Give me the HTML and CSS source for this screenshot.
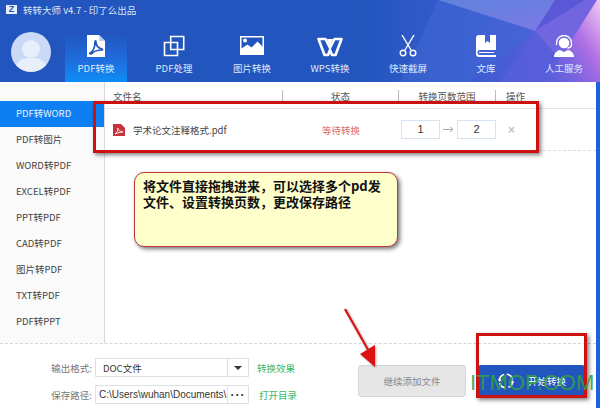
FILE: index.html
```html
<!DOCTYPE html>
<html lang="zh-CN">
<head>
<meta charset="utf-8">
<title>转转大师</title>
<link rel="stylesheet" href="styles.css">
</head>
<body>
<div class="app">
  <header class="header">
    <svg class="deco" viewBox="0 0 600 82" preserveAspectRatio="none" aria-hidden="true">
      <defs>
        <linearGradient id="sweep" x1="0" y1="0" x2="1" y2="0">
          <stop offset="0" stop-color="#2255bd"/>
          <stop offset="0.45" stop-color="#3a5cd0"/>
          <stop offset="1" stop-color="#6a5fe0"/>
        </linearGradient>
        <linearGradient id="pink" x1="0" y1="1" x2="1" y2="0">
          <stop offset="0" stop-color="#7a62e0" stop-opacity="0"/>
          <stop offset="0.6" stop-color="#b070e4"/>
          <stop offset="1" stop-color="#f2c8f4"/>
        </linearGradient>
        <linearGradient id="glow" x1="0" y1="0" x2="1" y2="1">
          <stop offset="0" stop-color="#5f82dc"/>
          <stop offset="1" stop-color="#7f78e6"/>
        </linearGradient>
      </defs>
      <rect x="360" y="0" width="240" height="82" fill="url(#sweep)"/>
      <polygon points="438,0 535,31 580,0" fill="url(#glow)"/>
      <polygon points="535,31 555,0 585,0" fill="#5a58d6"/>
      <polygon points="535,31 560,60 597,0 585,0" fill="#7265e0"/>
      <polygon points="438,0 535,31 470,82 400,82" fill="#3f68d4" opacity=".55"/>
      <polygon points="535,31 560,60 545,82 500,82" fill="#5a5fdc" opacity=".7"/>
      <polygon points="597,0 600,0 600,82 545,82" fill="url(#pink)"/>
    </svg>
    <div class="titlebar">
      <span class="logo">Z</span>
      <span class="title">转转大师 v4.7 - 印了么出品</span>
    </div>
    <div class="navrow">
      <div class="avatar">
        <svg viewBox="0 0 40 40" width="40" height="40" aria-hidden="true">
          <circle cx="20" cy="20" r="20" fill="#c9d9f6"/>
          <circle cx="20" cy="17" r="9" fill="#e8effb"/>
          <path d="M5 33c3-6 9-7 15-7s12 1 15 7a20 20 0 0 1-30 0z" fill="#e8effb"/>
        </svg>
      </div>
      <nav class="nav">
        <a class="tab active">
          <svg viewBox="0 0 20 22" width="20" height="22" aria-hidden="true">
            <path d="M1 0h12l6 6v16H1z" fill="#fff"/>
            <path d="M13 0v6h6z" fill="#bcd0f2"/>
            <path d="M4 18c3-1 5-6 5-11 0-1.500 1-1.500 1 0 0 4 2 6 6 7 .8.2.8 1 0 1-4 0-8 1-10 3.500-1 1-3 0-2-.5z" fill="none" stroke="#2255bd" stroke-width="1.700"/>
          </svg>
          <span>PDF转换</span>
        </a>
        <a class="tab">
          <svg viewBox="0 0 22 22" width="22" height="22" aria-hidden="true">
            <path d="M7.700 1.500h13v13h-13zM1.500 7.500h13v13h-13z" fill="none" stroke="#fff" stroke-width="1.600"/>
          </svg>
          <span>PDF处理</span>
        </a>
        <a class="tab">
          <svg viewBox="0 0 24 24" width="24" height="24" aria-hidden="true">
            <path fill-rule="evenodd" d="M0 3h24v19H0zM1.500 4.500v11l6-4 4 3 6-6 5 5v-9z" fill="#fff"/>
            <circle cx="5" cy="7.500" r="2" fill="#fff"/>
          </svg>
          <span>图片转换</span>
        </a>
        <a class="tab">
          <svg viewBox="0 0 26 20" width="26" height="20" aria-hidden="true">
            <path d="M1.500 2h7l4.500 9 4.500-9h7L18.500 18H15l-2-5-2 5H7.500z" fill="none" stroke="#fff" stroke-width="2.600" stroke-linejoin="round"/>
            <path d="M10 2h6l-3 7z" fill="#fff"/>
          </svg>
          <span>WPS转换</span>
        </a>
        <a class="tab">
          <svg viewBox="0 0 18 22" width="18" height="22" aria-hidden="true">
            <g fill="none" stroke="#fff" stroke-width="1.400">
              <path d="M3 0l9 15M15 0L6 15"/>
              <circle cx="4" cy="18" r="2.800"/>
              <circle cx="14" cy="18" r="2.800"/>
            </g>
          </svg>
          <span>快速截屏</span>
        </a>
        <a class="tab">
          <svg viewBox="0 0 20 22" width="20" height="22" aria-hidden="true">
            <path fill-rule="evenodd" d="M0 3a3 3 0 0 1 3-3h6v8l2.500-2L14 8V0h6v15H4a2 2 0 0 0 0 5h16v2H3a3 3 0 0 1-3-3z" fill="#fff"/>
            <path d="M3 17.500h15" stroke="#fff" stroke-width="1"/>
          </svg>
          <span>文库</span>
        </a>
        <a class="tab">
          <svg viewBox="0 0 20 22" width="20" height="22" aria-hidden="true">
            <circle cx="10" cy="8" r="5.300" fill="#fff"/>
            <path d="M2.500 10V8a7.500 7.500 0 0 1 15 0v2a4 4 0 0 1-4 3" fill="none" stroke="#fff" stroke-width="1.300"/>
            <path d="M0 22c0-4 3-6.500 6-7l4 2 4-2c3 .5 6 3 6 7z" fill="#fff"/>
          </svg>
          <span>人工服务</span>
        </a>
      </nav>
    </div>
  </header>

  <main class="main">
    <aside class="sidebar">
      <a class="side active">PDF转WORD</a>
      <a class="side">PDF转图片</a>
      <a class="side">WORD转PDF</a>
      <a class="side">EXCEL转PDF</a>
      <a class="side">PPT转PDF</a>
      <a class="side">CAD转PDF</a>
      <a class="side">图片转PDF</a>
      <a class="side">TXT转PDF</a>
      <a class="side">PDF转PPT</a>
    </aside>
    <section class="content">
      <div class="thead">
        <div class="th th-name">文件名</div>
        <div class="th th-center">状态</div>
        <div class="th th-center">转换页数范围</div>
        <div class="th th-op">操作</div>
      </div>
      <div class="trow">
        <div class="cell-name">
          <svg viewBox="0 0 12 12" width="12" height="12" aria-hidden="true">
            <path d="M0 0h8l4 4v8H0z" fill="#c8303a"/>
            <path d="M2 10c2-1 3-4 3-6 0 2 1 3 5 4-3 0-5 1-8 2z" fill="none" stroke="#fff" stroke-width=".9"/>
          </svg>
          <span>学术论文注释格式.pdf</span>
        </div>
        <div class="cell-status">等待转换</div>
        <div class="cell-range">
          <span class="num">1</span>
          <svg class="to" viewBox="0 0 11 7" width="11" height="7" aria-hidden="true">
            <path d="M0 3.500h10M7 1l3 2.500L7 6" fill="none" stroke="#aaa" stroke-width="1"/>
          </svg>
          <span class="num">2</span>
        </div>
        <div class="cell-op">×</div>
      </div>
    </section>
  </main>

  <footer class="footer">
    <div class="form">
      <div class="form-row">
        <span class="label">输出格式:</span>
        <div class="field">
          <span class="value value-select">DOC文件</span>
          <span class="addon"><i class="caret"></i></span>
        </div>
        <a class="link">转换效果</a>
      </div>
      <div class="form-row">
        <span class="label">保存路径:</span>
        <div class="field">
          <span class="value value-path">C:\Users\wuhan\Documents\</span>
          <span class="addon addon-dots">···</span>
        </div>
        <a class="link link-open">打开目录</a>
      </div>
    </div>
    <button class="btn btn-add">继续添加文件</button>
    <button class="btn btn-start">
      <svg viewBox="0 0 20 20" width="18" height="18" aria-hidden="true">
        <circle cx="10" cy="10" r="7.500" fill="none" stroke="#fff" stroke-width="1.800" stroke-dasharray="9 3"/>
        <path d="M3 11l-2-3h4zM17 9l-2 3h4z" fill="#fff"/>
      </svg>
      <span>开始转换</span>
    </button>
  </footer>

  <div class="callout">将文件直接拖拽进来，可以选择多个pd发文件、设置转换页数，更改保存路径</div>
  <div class="redbox redbox-row"></div>
  <div class="redbox redbox-start"></div>
  <svg class="arrow" viewBox="0 0 50 70" width="50" height="70" aria-hidden="true">
    <path d="M4 2L30 48" stroke="#dd1111" stroke-width="2.200" fill="none"/>
    <path d="M19 47l15-9 0 22z" fill="#dd1111"/>
  </svg>
  <div class="watermark">ITMOP.COM</div>
</div>
</body>
</html>
```
FILE: styles.css
```css
* { box-sizing: border-box; }
html, body { margin: 0; padding: 0; }
body {
  width: 600px;
  height: 408px;
  overflow: hidden;
  font-family: "Noto Sans CJK SC", "Liberation Sans", sans-serif;
  font-size: 9.500px;
  color: #444;
}
.app {
  position: relative;
  width: 600px;
  height: 408px;
  display: flex;
  flex-direction: column;
  background: #fff;
  padding-right: 4px;
  background-image: linear-gradient(#2060e0, #2060e0);
  background-size: 4px 100%;
  background-position: right top;
  background-repeat: no-repeat;
}
.header {
  position: relative;
  height: 82px;
  margin-right: -4px;
  background: #2255bd;
  color: #fff;
  flex: none;
}
.deco { position: absolute; inset: 0; width: 600px; height: 82px; }
.titlebar {
  position: relative;
  height: 19px;
  display: flex;
  align-items: center;
  gap: 6px;
  padding: 0 0 0 6px;
}
.logo {
  width: 11px;
  height: 9px;
  background: #e6eefb;
  color: #2255bd;
  font: bold 9px/9px "Liberation Sans", sans-serif;
  text-align: center;
}
.title { font-size: 9.500px; line-height: 14px; color: #dbe6f8; }
.navrow {
  position: relative;
  display: flex;
  height: 63px;
  padding-left: 11px;
}
.avatar { width: 40px; height: 40px; margin-top: 13px; flex: none; }
.avatar svg { display: block; }
.nav { display: flex; gap: 16px; margin-left: 14px; }
.tab {
  width: 62px;
  height: 49px;
  margin-top: 14px;
  display: flex;
  flex-direction: column;
  align-items: center;
  justify-content: flex-end;
  gap: 5px;
  padding-bottom: 8px;
  color: #dfe9fb;
  font-size: 9.500px;
  line-height: 12px;
  white-space: nowrap;
}
.tab svg { display: block; }
.tab.active { background: linear-gradient(#2255bd, #1f6fe0 60%, #0d8df5); }

.main { display: flex; height: 261px; flex: none; }
.sidebar {
  width: 105px;
  flex: none;
  background: #fafafa;
  border-right: 1px solid #d9d9d9;
  padding-top: 19px;
  display: flex;
  flex-direction: column;
}
.side {
  height: 26px;
  padding-left: 16px;
  font-size: 9.500px;
  line-height: 25px;
  color: #444;
}
.side.active { background: #0d7ff2; color: #e8f2ff; }
.content { flex: 1; min-width: 0; }
.thead {
  display: grid;
  grid-template-columns: 178px 116px 97px 1fr;
  height: 27px;
  padding-top: 8px;
  border-bottom: 1px solid #e4e4e4;
}
.th { height: 11px; line-height: 13px; font-size: 9.500px; color: #555; border-right: 1px solid #bbb; }
.th-name { padding-left: 8px; }
.th-center { text-align: center; }
.th-op { border-right: 0; padding-left: 10px; }
.trow {
  display: grid;
  grid-template-columns: 178px 116px 97px 1fr;
  height: 42px;
  align-items: center;
  border-bottom: 1px dashed #dcdcdc;
}
.cell-name { display: flex; align-items: center; gap: 8px; padding-left: 8px; font-size: 9.500px; color: #444; }
.cell-status { text-align: center; color: #dd6a66; font-size: 9.500px; }
.cell-range { display: flex; align-items: center; gap: 3px; padding-left: 2px; }
.num {
  width: 39px;
  height: 19px;
  border: 1px solid #d5e3f3;
  text-align: center;
  line-height: 17px;
  font-size: 11px;
  color: #333;
  font-family: "Liberation Sans", sans-serif;
}
.cell-op { color: #c4c4c4; font: bold 12px/1 "Liberation Sans", sans-serif; padding-left: 12px; }

.footer {
  flex: 1;
  display: flex;
  align-items: flex-end;
  border-top: 1px dashed #d5d5d5;
  padding-bottom: 11px;
}
.form {
  width: 358px;
  display: flex;
  flex-direction: column;
  gap: 8px;
  margin-bottom: -7px;
  flex: none;
}
.form-row { display: flex; align-items: center; height: 19px; }
.label { width: 92px; text-align: right; color: #777; font-size: 9.500px; }
.field {
  width: 154px;
  height: 19px;
  margin-left: 3px;
  border: 1px solid #e0e0e0;
  display: flex;
  align-items: center;
  overflow: hidden;
  flex: none;
}
.value { flex: 1; min-width: 0; white-space: nowrap; overflow: hidden; font-size: 9.500px; color: #333; }
.value-select { padding-left: 7px; }
.value-path { padding-left: 3px; font-family: "Liberation Sans", "Noto Sans CJK SC", sans-serif; font-size: 10px; }
.addon {
  width: 21px;
  height: 17px;
  border-left: 1px solid #e0e0e0;
  display: flex;
  align-items: center;
  justify-content: center;
  flex: none;
}
.addon-dots { font: bold 12px/1 "Liberation Sans", sans-serif; color: #333; letter-spacing: 1px; }
.caret { width: 0; height: 0; border: 4px solid transparent; border-top: 4px solid #333; border-bottom: 0; }
.link { margin-left: 8px; color: #3cb565; font-size: 9.500px; white-space: nowrap; }
.link-open { margin-left: 10px; }
.btn {
  height: 32px;
  border-radius: 3px;
  font-family: inherit;
  font-size: 9.500px;
  padding: 0;
  flex: none;
}
.btn-add {
  width: 108px;
  background: #e6e6e6;
  border: 1px solid #cfd8e0;
  color: #8a8a8a;
}
.btn-start {
  width: 107px;
  margin-left: 12px;
  background: #2255bd;
  border: 0;
  color: #fff;
  display: flex;
  align-items: center;
  justify-content: center;
  gap: 13px;
}

.callout {
  position: absolute;
  left: 134px;
  top: 172px;
  width: 264px;
  height: 75px;
  padding: 5px 8px;
  background: #ffffcc;
  border: 1.500px solid #c0343a;
  border-radius: 10px;
  box-shadow: 2px 2px 4px rgba(0, 0, 0, .55);
  color: #111;
  font-size: 13px;
  font-weight: 700;
  line-height: 16px;
}
.redbox {
  position: absolute;
  border: 3px solid #cc1111;
  box-shadow: 2px 2px 4px rgba(0, 0, 0, .5);
}
.redbox-row { left: 93px; top: 101px; width: 446px; height: 52px; }
.redbox-start { left: 476px; top: 333px; width: 111px; height: 65px; }
.arrow { position: absolute; left: 341px; top: 307px; filter: drop-shadow(1px 1px 1px rgba(0,0,0,.35)); }
.watermark {
  position: absolute;
  left: 470px;
  top: 370px;
  font: 22px/26px "Liberation Sans", sans-serif;
  color: rgba(50, 160, 70, .9);
  white-space: nowrap;
}
```
